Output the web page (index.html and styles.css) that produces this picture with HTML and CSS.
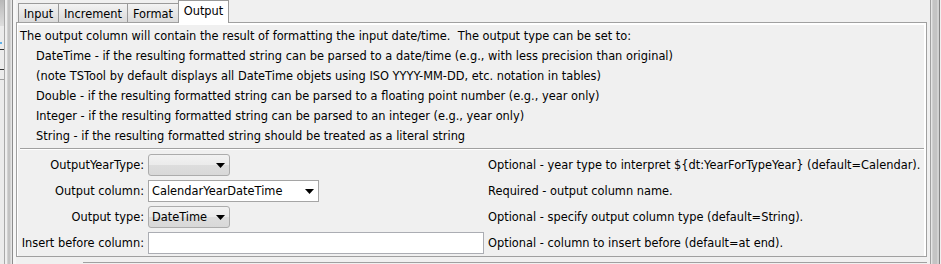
FILE: index.html
```html
<!DOCTYPE html>
<html>
<head>
<meta charset="utf-8">
<link rel="stylesheet" href="styles.css">
</head>
<body>
<div class="window">
  <div class="lstrip">
    <div class="lfrag">
      <div class="lf-top"></div>
      <div class="lf-tick"></div>
      <div class="lf-dark lf-d1"></div>
      <div class="lf-dark lf-d2"></div>
      <div class="lf-gray"></div>
    </div>
  </div>
  <div class="main">
    <div class="tabs">
      <div class="tab t-input">Input</div>
      <div class="tab t-inc">Increment</div>
      <div class="tab t-fmt">Format</div>
      <div class="tab t-out sel">Output</div>
    </div>
    <div class="panel">
      <div class="intro">
        <div class="line">The output column will contain the result of formatting the input date/time.  The output type can be set to:</div>
        <div class="line ind">DateTime - if the resulting formatted string can be parsed to a date/time (e.g., with less precision than original)</div>
        <div class="line ind">(note TSTool by default displays all DateTime objets using ISO YYYY-MM-DD, etc. notation in tables)</div>
        <div class="line ind">Double - if the resulting formatted string can be parsed to a floating point number (e.g., year only)</div>
        <div class="line ind">Integer - if the resulting formatted string can be parsed to an integer (e.g., year only)</div>
        <div class="line ind">String - if the resulting formatted string should be treated as a literal string</div>
      </div>
      <div class="sep"></div>
      <div class="form">
        <div class="lbl">OutputYearType:</div>
        <div class="ctl">
          <div class="combo btn w-short">
            <span class="val"></span>
            <svg class="arr" width="9" height="5" viewBox="0 0 9 5"><polygon points="0,0 9,0 4.5,5" fill="#000"/></svg>
          </div>
        </div>
        <div class="desc">Optional - year type to interpret ${dt:YearForTypeYear} (default=Calendar).</div>

        <div class="lbl">Output column:</div>
        <div class="ctl">
          <div class="combo edit w-mid">
            <span class="val">CalendarYearDateTime</span>
            <svg class="arr" width="9" height="5" viewBox="0 0 9 5"><polygon points="0,0 9,0 4.5,5" fill="#000"/></svg>
          </div>
        </div>
        <div class="desc">Required - output column name.</div>

        <div class="lbl">Output type:</div>
        <div class="ctl">
          <div class="combo btn w-short">
            <span class="val">DateTime</span>
            <svg class="arr" width="9" height="5" viewBox="0 0 9 5"><polygon points="0,0 9,0 4.5,5" fill="#000"/></svg>
          </div>
        </div>
        <div class="desc">Optional - specify output column type (default=String).</div>

        <div class="lbl">Insert before column:</div>
        <div class="ctl">
          <div class="field"></div>
        </div>
        <div class="desc">Optional - column to insert before (default=at end).</div>
      </div>
    </div>
    <div class="bottom"><div class="bline"></div></div>
  </div>
  <div class="rstrip"></div>
</div>
</body>
</html>
```
FILE: styles.css
```css
html, body {
  margin: 0;
  padding: 0;
  background: #f0f0f0;
}
body {
  font-family: "DejaVu Sans", Tahoma, sans-serif;
  font-size: 11.4px;
  color: #000;
}
.window {
  display: flex;
  width: 941px;
  height: 264px;
  overflow: hidden;
}

/* left strip: bits of another window */
.lstrip {
  width: 16px;
  flex: none;
  display: flex;
  background: linear-gradient(to right,
    #ececec 0 4px, #a9a9a9 4px 5px, #efefef 5px 7px,
    #d2d2d2 7px 8px, #c3c3c3 8px 10px, #d4d4d4 10px 11px,
    #e6e6e6 11px 12px, #8c8c8c 12px 13px, #f6f6f6 13px 16px);
}
.lfrag {
  width: 4px;
  display: flex;
  flex-direction: column;
}
.lf-top {
  height: 26px;
  background: linear-gradient(#b8b8b8, #dedede);
}
.lf-tick {
  width: 2px;
  height: 2px;
  margin-top: 16px;
  background: #5fb0e8;
}
.lf-dark {
  height: 1px;
  background: #333;
}
.lf-d1 { margin-top: 5px; }
.lf-d2 { margin-top: 19px; }
.lf-gray {
  height: 1px;
  margin-top: 9px;
  background: #a0a0a0;
}

.rstrip {
  width: 14px;
  flex: none;
  background: linear-gradient(to right,
    #f0f0f0 0 3px, #a0a0a0 3px 4px, #e6e6e6 4px 5px,
    #d0d0d0 5px 6px, #c4c4c4 6px 10px, #d2d2d2 10px 12px,
    #858585 12px 13px, #f0f0f0 13px 14px);
}

.main {
  width: 911px;
  flex: none;
  display: flex;
  flex-direction: column;
}

/* tabs */
.tabs {
  height: 22px;
  display: flex;
  align-items: flex-end;
  padding-left: 2px;
}
.tab {
  box-sizing: border-box;
  height: 19px;
  border: 1px solid #9a9a9a;
  border-bottom: none;
  background: linear-gradient(#f3f3f3, #e4e4e4 60%, #dadada);
  display: flex;
  align-items: center;
  justify-content: center;
  padding-top: 1px;
  white-space: nowrap;
}
.tab + .tab { margin-left: -1px; }
.t-input { width: 41px; }
.t-inc { width: 70px; }
.t-fmt { width: 52px; }
.t-out { width: 51px; }
.tab.sel {
  height: 23px;
  margin-bottom: -1px;
  background: #fff;
  position: relative;
  z-index: 1;
  padding-top: 0;
  padding-bottom: 2px;
}

/* content panel */
.panel {
  box-sizing: border-box;
  width: 911px;
  height: 235px;
  border: 1px solid #a0a0a0;
  background: #f0f0f0;
  box-shadow: inset 0 2px 0 #fff, inset -2px 0 0 #fff, inset 1px 0 0 #fff;
  padding: 3px 0 0 3px;
}
.intro .line {
  height: 20px;
  line-height: 20px;
  white-space: pre;
}
.intro .ind {
  padding-left: 16px;
}
.sep {
  margin-top: 2px;
  margin-right: 2px;
  border-top: 1px solid #a0a0a0;
  border-bottom: 1px solid #fff;
}
.form {
  margin-top: 4px;
  display: grid;
  grid-template-columns: 124px 336px auto;
  grid-auto-rows: 22px;
  column-gap: 4px;
  row-gap: 4px;
}
.lbl {
  display: flex;
  align-items: center;
  justify-content: flex-end;
  white-space: nowrap;
}
.desc {
  display: flex;
  align-items: center;
  white-space: nowrap;
}
.ctl {
  display: flex;
  align-items: stretch;
}
.combo {
  box-sizing: border-box;
  height: 22px;
  display: flex;
  align-items: center;
  padding: 0 4px 0 3px;
  white-space: nowrap;
}
.combo .val {
  flex: 1;
}
.combo .arr {
  flex: none;
  display: block;
}
.combo.btn {
  border: 1px solid #acacac;
  border-radius: 3px;
  background: linear-gradient(#f2f2f2, #ebebeb 50%, #dddddd 51%, #d8d8d8);
}
.combo.edit {
  border: 1px solid #a5a5a5;
  background: #fff;
}
.w-short { width: 82px; }
.w-mid { width: 171px; }
.field {
  box-sizing: border-box;
  width: 336px;
  height: 22px;
  border: 1px solid #abadb3;
  background: #fff;
}

.bottom {
  height: 7px;
}
.bline {
  margin-top: 5px;
  margin-left: 67px;
  margin-right: -5px;
  border-top: 1px solid #a0a0a0;
}
```
